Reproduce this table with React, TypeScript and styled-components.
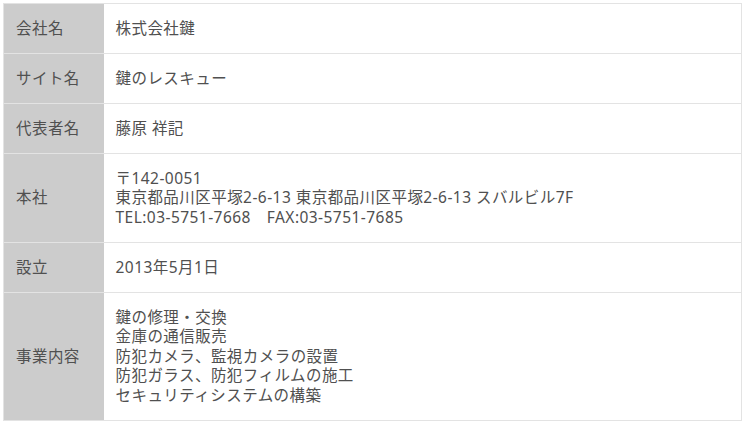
import React from "react";
import styled, { createGlobalStyle } from "styled-components";

const Global = createGlobalStyle`
  html, body { margin: 0; padding: 0; background: #fff; }
  body { font-family: "Noto Sans", "Noto Sans CJK JP", sans-serif; }
`;

const Wrap = styled.div`
  padding: 3px 5px 0 3px;
`;

const Table = styled.table`
  width: 100%;
  border-collapse: collapse;
  border: 1px solid #e3e3e3;
`;

const Row = styled.tr`
  border-bottom: 1px solid #e3e3e3;
`;

const Head = styled.th`
  width: 100px;
  box-sizing: border-box;
  background: #cccccc;
  color: #505050;
  font-weight: normal;
  text-align: left;
  vertical-align: middle;
  font-size: 15.5px;
  line-height: 19.5px;
  letter-spacing: 0.45px;
  padding: 14.75px 12px;
  white-space: nowrap;
`;

const Cell = styled.td`
  color: #505050;
  font-size: 15.5px;
  line-height: 19.5px;
  letter-spacing: 0.45px;
  padding: 14.75px 12px;
  vertical-align: middle;
`;

const Line = styled.div`
  white-space: pre;
`;

const rows: { label: string; lines: string[] }[] = [
  { label: "会社名", lines: ["株式会社鍵"] },
  { label: "サイト名", lines: ["鍵のレスキュー"] },
  { label: "代表者名", lines: ["藤原 祥記"] },
  {
    label: "本社",
    lines: [
      "〒142-0051",
      "東京都品川区平塚2-6-13 東京都品川区平塚2-6-13 スバルビル7F",
      "TEL:03-5751-7668　FAX:03-5751-7685",
    ],
  },
  { label: "設立", lines: ["2013年5月1日"] },
  {
    label: "事業内容",
    lines: [
      "鍵の修理・交換",
      "金庫の通信販売",
      "防犯カメラ、監視カメラの設置",
      "防犯ガラス、防犯フィルムの施工",
      "セキュリティシステムの構築",
    ],
  },
];

export default function App() {
  return (
    <>
      <Global />
      <Wrap>
        <Table>
          <tbody>
            {rows.map((r) => (
              <Row key={r.label}>
                <Head>{r.label}</Head>
                <Cell>
                  {r.lines.map((l) => (
                    <Line key={l}>{l}</Line>
                  ))}
                </Cell>
              </Row>
            ))}
          </tbody>
        </Table>
      </Wrap>
    </>
  );
}
